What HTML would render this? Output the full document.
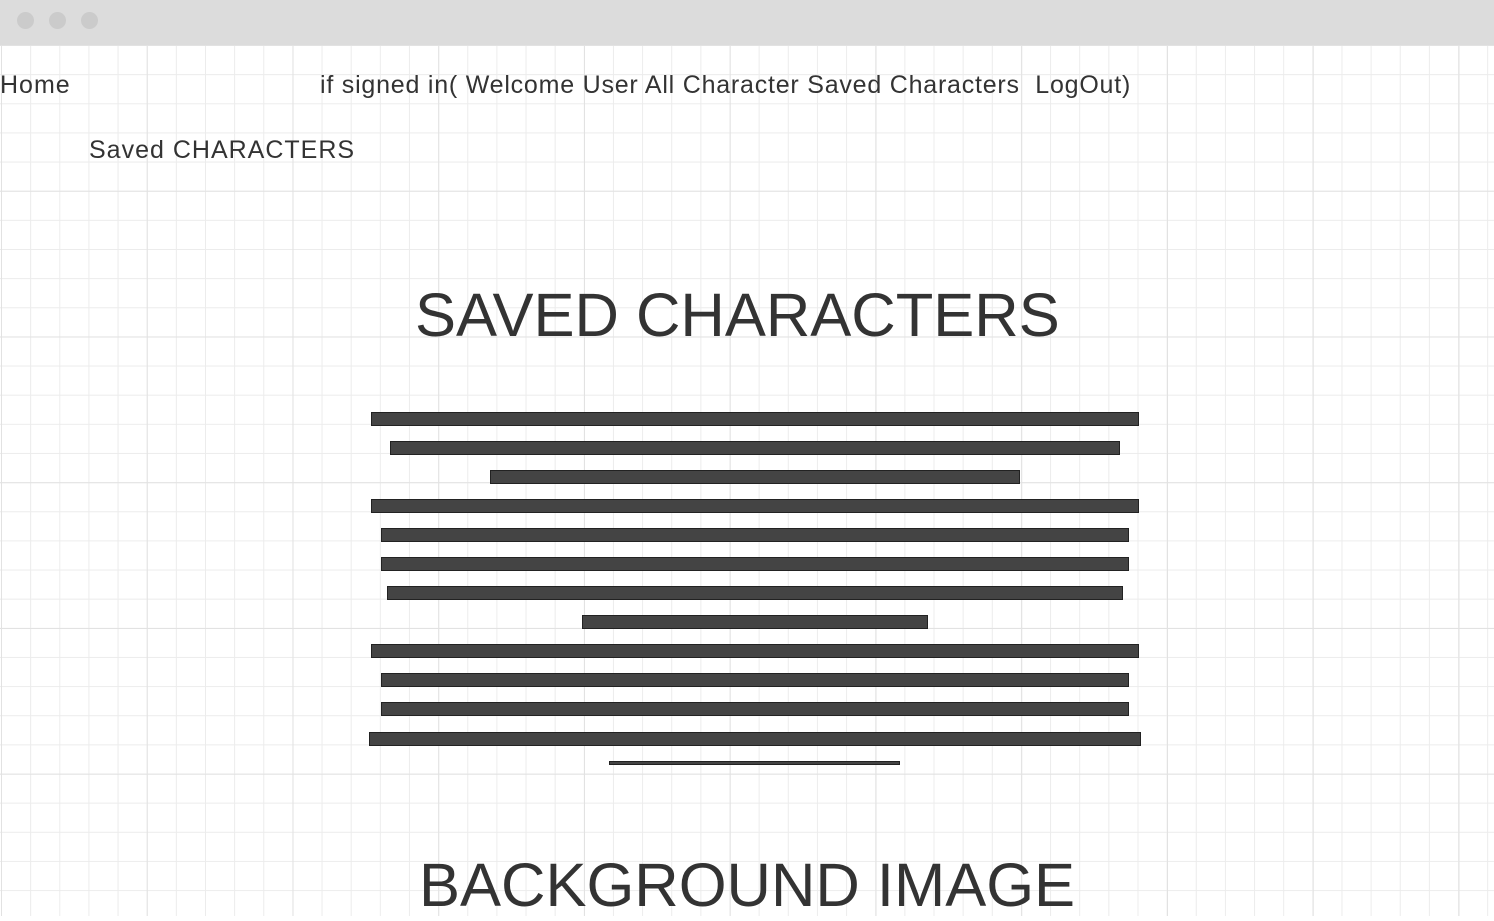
<!DOCTYPE html>
<html><head><style>
body{margin:0;width:1494px;height:916px;overflow:hidden;position:relative;font-family:"Liberation Sans",sans-serif;color:#333;background:#fff;}
.top{position:absolute;left:0;top:0;width:1494px;height:45px;background:#dcdcdc;}
.dot{position:absolute;top:12px;width:17px;height:17px;border-radius:50%;background:#cbcbcb;}
.grid{position:absolute;left:0;top:45px;width:1494px;height:871px;
background-image:linear-gradient(#e2e2e2 1px,transparent 1px),linear-gradient(90deg,#e2e2e2 1px,transparent 1px),linear-gradient(#ececec 1px,transparent 1px),linear-gradient(90deg,#ececec 1px,transparent 1px);
background-size:145.75px 145.75px,145.75px 145.75px,29.15px 29.15px,29.15px 29.15px;background-position:0 0,1px 0,0 0,1px 0;}
.t{position:absolute;white-space:nowrap;}
.b{position:absolute;height:14px;background:#444;border:1px solid #222;box-sizing:border-box;}
</style></head><body>
<div class="top"><div class="dot" style="left:17px"></div><div class="dot" style="left:49px"></div><div class="dot" style="left:81px"></div></div>
<div class="grid"></div>
<div class="t" style="left:0;top:71px;font-size:25px;letter-spacing:1px">Home</div>
<div class="t" style="left:320px;top:71px;font-size:25px;letter-spacing:0.78px">if signed in( Welcome User All Character Saved Characters&nbsp; LogOut)</div>
<div class="t" style="left:89px;top:136px;font-size:25px;letter-spacing:1px">Saved CHARACTERS</div>
<div class="t" style="left:415px;top:280px;font-size:61.5px">SAVED CHARACTERS</div>
<div class="t" style="left:419px;top:850px;font-size:61.5px">BACKGROUND IMAGE</div>
<div class="b" style="left:371px;width:768px;top:412px"></div>
<div class="b" style="left:390px;width:730px;top:441px"></div>
<div class="b" style="left:490px;width:530px;top:470px"></div>
<div class="b" style="left:371px;width:768px;top:499px"></div>
<div class="b" style="left:381px;width:748px;top:528px"></div>
<div class="b" style="left:381px;width:748px;top:557px"></div>
<div class="b" style="left:387px;width:736px;top:586px"></div>
<div class="b" style="left:582px;width:346px;top:615px"></div>
<div class="b" style="left:371px;width:768px;top:644px"></div>
<div class="b" style="left:381px;width:748px;top:673px"></div>
<div class="b" style="left:381px;width:748px;top:702px"></div>
<div class="b" style="left:369px;width:772px;top:732px"></div>
<div class="b" style="left:609px;width:291px;top:761px;height:4px"></div>
</body></html>
